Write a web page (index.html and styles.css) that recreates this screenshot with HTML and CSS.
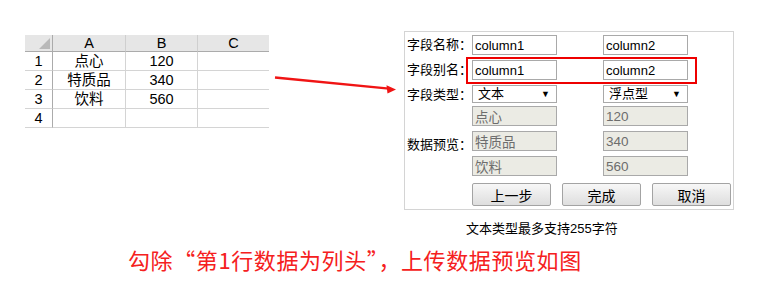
FILE: index.html
```html
<!DOCTYPE html>
<html>
<head>
  <meta charset="utf-8" />
  <meta name="viewport" content="width=device-width" />
  <title>数据预览</title>
  <link rel="stylesheet" href="styles.css">
</head>

<body>
  <div class="top">
    <div class="sheet">
      <div class="sheet-head sheet-corner"></div>
      <div class="sheet-head">A</div>
      <div class="sheet-head">B</div>
      <div class="sheet-head sheet-last">C</div>

      <div class="sheet-num">1</div>
      <div class="sheet-cell">点心</div>
      <div class="sheet-cell">120</div>
      <div class="sheet-cell sheet-last"></div>

      <div class="sheet-num">2</div>
      <div class="sheet-cell">特质品</div>
      <div class="sheet-cell">340</div>
      <div class="sheet-cell sheet-last"></div>

      <div class="sheet-num">3</div>
      <div class="sheet-cell">饮料</div>
      <div class="sheet-cell">560</div>
      <div class="sheet-cell sheet-last"></div>

      <div class="sheet-num">4</div>
      <div class="sheet-cell"></div>
      <div class="sheet-cell"></div>
      <div class="sheet-cell sheet-last"></div>
    </div>

    <svg class="arrow" width="135" height="70" viewBox="0 0 135 70">
      <line x1="6" y1="46.5" x2="120" y2="57.6" stroke="#f01414" stroke-width="2.4" />
      <polygon points="127,58.4 117.5,54.2 118.5,62.6" fill="#f01414" />
    </svg>

    <div class="import">
      <div class="import-panel">
        <span class="import-mark"></span>

        <label class="import-label">字段名称：</label>
        <input class="import-input" type="text" value="column1" />
        <input class="import-input import-col2" type="text" value="column2" />

        <label class="import-label">字段别名：</label>
        <input class="import-input" type="text" value="column1" />
        <input class="import-input import-col2" type="text" value="column2" />

        <label class="import-label">字段类型：</label>
        <div class="import-select"><span>文本</span><span class="import-caret">▼</span></div>
        <div class="import-select import-col2"><span>浮点型</span><span class="import-caret">▼</span></div>

        <label class="import-label import-preview-label">数据预览：</label>
        <input class="import-input import-preview" type="text" value="点心" disabled />
        <input class="import-input import-preview import-col2" type="text" value="120" disabled />
        <input class="import-input import-preview" type="text" value="特质品" disabled />
        <input class="import-input import-preview import-col2" type="text" value="340" disabled />
        <input class="import-input import-preview" type="text" value="饮料" disabled />
        <input class="import-input import-preview import-col2" type="text" value="560" disabled />

        <div class="import-buttons">
          <button type="button">上一步</button>
          <button type="button">完成</button>
          <button type="button">取消</button>
        </div>
      </div>
      <p class="import-note">文本类型最多支持255字符</p>
    </div>
  </div>

  <p class="caption">勾除“第1行数据为列头”，上传数据预览如图</p>
</body>
</html>
```

FILE: styles.css
```css
body {
  margin: 0;
  background-color: white;
  color: black;
  font-family: "Liberation Sans", "Noto Sans CJK SC", sans-serif;
  font-size: 13px;
}

.top {
  display: flex;
  align-items: flex-start;
  padding-top: 31px;
}

/* spreadsheet */
.sheet {
  display: grid;
  grid-template-columns: 28px 73px 72px 71px;
  grid-template-rows: 17px repeat(4, 19px);
  margin: 4px 0 0 25px;
  font-size: 14.5px;
}

.sheet > div {
  box-sizing: border-box;
  display: flex;
  align-items: center;
  justify-content: center;
  line-height: 17px;
}

.sheet-head {
  background-color: #e6e6e6;
  border-bottom: 1px solid #ababab;
  border-right: 1px solid #cfcfcf;
}

.sheet-corner {
  position: relative;
  border-right-color: #ababab;
}

.sheet-corner::after {
  content: "";
  position: absolute;
  right: 2px;
  bottom: 2px;
  width: 11px;
  height: 11px;
  background-color: #b9b9b9;
  clip-path: polygon(100% 0, 100% 100%, 0 100%);
}

.sheet-num {
  border-right: 1px solid #ababab;
  border-bottom: 1px solid #d4d4d4;
}

.sheet-cell {
  border-right: 1px solid #d4d4d4;
  border-bottom: 1px solid #d4d4d4;
}

.sheet .sheet-last {
  border-right: none;
}

.arrow {
  display: block;
  flex: none;
}

/* import panel */
.import {
  display: flex;
  flex-direction: column;
}

.import-panel {
  position: relative;
  box-sizing: border-box;
  width: 330px;
  height: 179px;
  padding: 3px 0 0 2px;
  border: 1px solid #d4d4d4;
  display: grid;
  grid-template-columns: 65px 85px 46px 85px;
  grid-template-rows: 25px 25px 21px 25px 25px 27px 22px;
  align-items: start;
}

.import-mark {
  position: absolute;
  left: 61px;
  top: 25px;
  width: 231px;
  height: 27px;
  box-sizing: border-box;
  border: 2px solid #ee0000;
}

.import-label {
  grid-column: 1;
  line-height: 20px;
  white-space: nowrap;
}

.import-preview-label {
  grid-row: 4 / 7;
  align-self: center;
}

.import-input {
  grid-column: 2;
  box-sizing: border-box;
  width: 85px;
  height: 20px;
  margin: 0;
  padding: 0 2px;
  border: 1px solid #a9a9a9;
  border-radius: 0;
  background-color: white;
  color: black;
  font-family: "Liberation Sans", "Noto Sans CJK SC", sans-serif;
  font-size: 13px;
}

.import-panel .import-col2 {
  grid-column: 4;
}

.import-preview {
  background-color: #ebebe4;
  color: #6d6d6d;
  font-size: 13.5px;
}

.import-select {
  grid-column: 2;
  box-sizing: border-box;
  width: 85px;
  height: 18px;
  padding: 0 6px 0 5px;
  border: 1px solid #a9a9a9;
  display: flex;
  align-items: center;
  justify-content: space-between;
  font-size: 13px;
  line-height: 16px;
}

.import-caret {
  font-size: 9px;
}

.import-buttons {
  grid-column: 2 / 5;
  display: flex;
  gap: 11px;
  width: 260px;
}

.import-buttons button {
  box-sizing: border-box;
  width: 79px;
  height: 23px;
  margin: 0;
  padding: 0;
  border: 1px solid #a3a3a3;
  border-radius: 2px;
  background: linear-gradient(#f7f7f7, #dedede);
  color: black;
  font-family: "Liberation Sans", "Noto Sans CJK SC", sans-serif;
  font-size: 14px;
}

.import-note {
  margin: 11px 0 0 62px;
  font-size: 13px;
  line-height: 16px;
}

.caption {
  margin: 8px 0 0 128px;
  color: #f52020;
  font-family: "Noto Sans CJK SC", sans-serif;
  font-size: 22px;
  line-height: 28px;
  letter-spacing: 0.6px;
}
```
